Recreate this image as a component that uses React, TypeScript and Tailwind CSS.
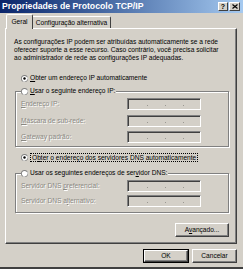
import React from "react";

const Radio = ({ checked }: { checked?: boolean }) => (
  <svg width="7" height="7" viewBox="0 0 7 7" className="shrink-0">
    <circle cx="3.5" cy="3.5" r="3.5" fill="#808080" />
    <path d="M6.2 1.5 A3.5 3.5 0 0 1 1.5 6.2 L6.2 1.5 Z" fill="#fff" />
    <circle cx="3.5" cy="3.5" r="2.6" fill="#fff" />
    {checked && <circle cx="3.5" cy="3.5" r="1.2" fill="#000" />}
  </svg>
);

const IpField = () => (
  <div className="w-[74px] h-[12px] bg-[#D4D0C8] border-t border-l border-[#808080] border-b border-r border-b-white border-r-white shadow-[inset_1px_1px_0_#404040] flex items-center">
    <span className="w-[19px]" />
    <span className="w-[1px] h-[1px] bg-[#9a9892] mt-[2px]" />
    <span className="w-[17px]" />
    <span className="w-[1px] h-[1px] bg-[#9a9892] mt-[2px]" />
    <span className="w-[17px]" />
    <span className="w-[1px] h-[1px] bg-[#9a9892] mt-[2px]" />
  </div>
);

const Dis = ({ children }: { children: React.ReactNode }) => (
  <span className="text-[#8a8882] [text-shadow:1px_1px_0_#ffffff]">{children}</span>
);

const Btn = ({
  children,
  w,
  def,
}: {
  children: React.ReactNode;
  w: string;
  def?: boolean;
}) => (
  <div
    className={
      def
        ? `${w} h-[14px] border border-black flex`
        : `${w} h-[14px] flex`
    }
  >
    <div className="flex-1 flex items-center justify-center bg-[#D4D0C8] border-t border-l border-white border-b border-r border-b-[#404040] border-r-[#404040] shadow-[inset_-1px_-1px_0_#808080]">
      {children}
    </div>
  </div>
);

export default function App() {
  return (
    <div className="w-[243px] h-[269px] bg-[#D4D0C8] flex flex-col overflow-hidden font-['Liberation_Sans',Arial,sans-serif] text-[6.6px] leading-[8px] text-black border-b-2 border-b-[#404040]">
      {/* Title bar */}
      <div className="h-[13px] shrink-0 flex items-center bg-linear-to-r from-[#0A246A] to-[#A6CAF0] pl-[2px] pr-[3px]">
        <span className="flex-1 text-white font-bold text-[8.7px] leading-none">
          Propriedades de Protocolo TCP/IP
        </span>
        <div className="flex gap-[1px]">
          <div className="w-[10px] h-[9px] bg-[#D4D0C8] border-t border-l border-white border-b border-r border-b-[#404040] border-r-[#404040] flex items-center justify-center text-[7px] font-bold leading-none">
            ?
          </div>
          <div className="w-[11px] h-[9px] bg-[#D4D0C8] border-t border-l border-white border-b border-r border-b-[#404040] border-r-[#404040] flex items-center justify-center">
            <svg width="6" height="5" viewBox="0 0 6 5">
              <path d="M0.5 0.5 L5.5 4.5 M5.5 0.5 L0.5 4.5" stroke="#000" strokeWidth="1.2" />
            </svg>
          </div>
        </div>
      </div>

      {/* Tabs */}
      <div className="h-[15px] shrink-0 flex items-end pl-[6px]">
        <div className="relative z-10 h-[15px] -mb-[1px] w-[27px] bg-[#D4D0C8] border-t border-l border-white border-r border-r-[#404040] rounded-tl-[2px] rounded-tr-[2px] flex items-center justify-center pb-[1px]">
          Geral
        </div>
        <div className="h-[12px] w-[78px] border-t border-white border-r border-r-[#404040] rounded-tr-[2px] flex items-center justify-center">
          Configuração alternativa
        </div>
      </div>

      {/* Panel */}
      <div className="ml-[5px] w-[232px] h-[216px] shrink-0 border-t border-l border-white border-b border-r border-b-[#404040] border-r-[#404040] shadow-[inset_-1px_-1px_0_#808080] flex flex-col">
        <p className="mt-[9px] ml-[8px]">
          As configurações IP podem ser atribuídas automaticamente se a rede
          <br />
          oferecer suporte a esse recurso. Caso contrário, você precisa solicitar
          <br />
          ao administrador de rede as configurações IP adequadas.
        </p>

        <div className="mt-[12px] ml-[15px] flex items-center gap-[2px] h-[8px]">
          <Radio checked />
          <span>
            <u>O</u>bter um endereço IP automaticamente
          </span>
        </div>

        {/* Group 1 */}
        <div className="mt-[9px] ml-[9px] w-[214px] h-[56px] border border-[#808080] shadow-[1px_1px_0_#fff,inset_1px_1px_0_#fff] flex flex-col">
          <div className="-mt-[5px] ml-[5px] w-fit pr-[1px] bg-[#D4D0C8] flex items-center gap-[2px] h-[8px]">
            <Radio />
            <span>
              <u>U</u>sar o seguinte endereço IP:
            </span>
          </div>
          <div className="mt-[3px] ml-[5px] flex items-center">
            <span className="w-[106px]">
              <Dis>
                <u>E</u>ndereço IP:
              </Dis>
            </span>
            <IpField />
          </div>
          <div className="mt-[5px] ml-[5px] flex items-center">
            <span className="w-[106px]">
              <Dis>
                <u>M</u>áscara de sub-rede:
              </Dis>
            </span>
            <IpField />
          </div>
          <div className="mt-[4px] ml-[5px] flex items-center">
            <span className="w-[106px]">
              <Dis>
                <u>G</u>ateway padrão:
              </Dis>
            </span>
            <IpField />
          </div>
        </div>

        <div className="mt-[6px] ml-[15px] flex items-center gap-[2px] h-[9px]">
          <Radio checked />
          <span className="border border-dotted border-black px-[1px] leading-[7px]">
            O<u>b</u>ter o endereço dos servidores DNS automaticamente
          </span>
        </div>

        {/* Group 2 */}
        <div className="mt-[11px] ml-[9px] w-[214px] h-[40px] border border-[#808080] shadow-[1px_1px_0_#fff,inset_1px_1px_0_#fff] flex flex-col">
          <div className="-mt-[5px] ml-[5px] w-fit pr-[1px] bg-[#D4D0C8] flex items-center gap-[2px] h-[8px]">
            <Radio />
            <span>
              Usar os seguintes endereços de ser<u>v</u>idor DNS:
            </span>
          </div>
          <div className="mt-[3px] ml-[5px] flex items-center">
            <span className="w-[106px]">
              <Dis>
                Servidor DNS <u>p</u>referencial:
              </Dis>
            </span>
            <IpField />
          </div>
          <div className="mt-[3px] ml-[5px] flex items-center">
            <span className="w-[106px]">
              <Dis>
                Servidor DNS a<u>l</u>ternativo:
              </Dis>
            </span>
            <IpField />
          </div>
        </div>

        <div className="mt-[10px] mr-[7px] flex justify-end">
          <Btn w="w-[54px]">
            <span>
              A<u>v</u>ançado...
            </span>
          </Btn>
        </div>
      </div>

      {/* Bottom buttons */}
      <div className="mt-[5px] mr-[6px] flex justify-end gap-[3px]">
        <Btn w="w-[46px]" def>
          OK
        </Btn>
        <Btn w="w-[45px]">Cancelar</Btn>
      </div>
    </div>
  );
}
